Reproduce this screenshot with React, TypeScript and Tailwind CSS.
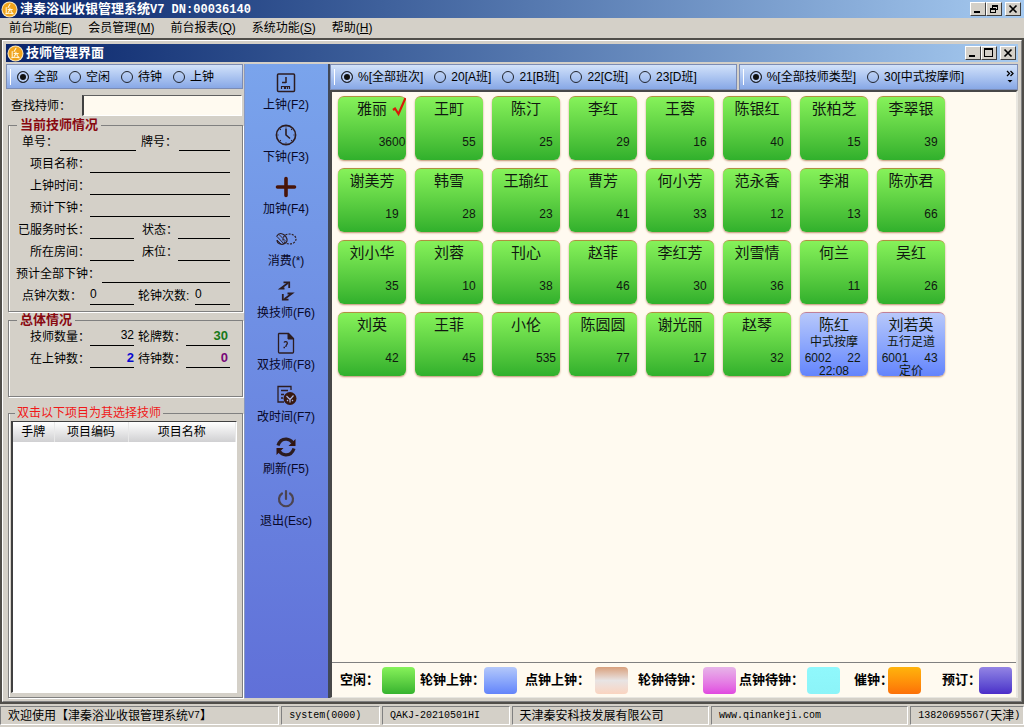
import React, { useState } from 'react';

interface Technician {
  name: string;
  no: string;
  service?: string;
  room?: string;
  note?: string;
}

const technicians: Technician[] = [
  { name: '雅丽', no: '3600' },
  { name: '王町', no: '55' },
  { name: '陈汀', no: '25' },
  { name: '李红', no: '29' },
  { name: '王蓉', no: '16' },
  { name: '陈银红', no: '40' },
  { name: '张柏芝', no: '15' },
  { name: '李翠银', no: '39' },
  { name: '谢美芳', no: '19' },
  { name: '韩雪', no: '28' },
  { name: '王瑜红', no: '23' },
  { name: '曹芳', no: '41' },
  { name: '何小芳', no: '33' },
  { name: '范永香', no: '12' },
  { name: '李湘', no: '13' },
  { name: '陈亦君', no: '66' },
  { name: '刘小华', no: '35' },
  { name: '刘蓉', no: '10' },
  { name: '刊心', no: '38' },
  { name: '赵菲', no: '46' },
  { name: '李红芳', no: '30' },
  { name: '刘雪情', no: '36' },
  { name: '何兰', no: '11' },
  { name: '吴红', no: '26' },
  { name: '刘英', no: '42' },
  { name: '王菲', no: '45' },
  { name: '小伦', no: '535' },
  { name: '陈圆圆', no: '77' },
  { name: '谢光丽', no: '17' },
  { name: '赵琴', no: '32' },
  { name: '陈红', no: '22', service: '中式按摩', room: '6002', note: '22:08' },
  { name: '刘若英', no: '43', service: '五行足道', room: '6001', note: '定价' },
];

const menus = [
  { text: '前台功能', key: 'F' },
  { text: '会员管理', key: 'M' },
  { text: '前台报表', key: 'Q' },
  { text: '系统功能', key: 'S' },
  { text: '帮助', key: 'H' },
];

const legends = [
  { text: '空闲：', label: 'w-[42px]', gap: '', swatch: 'from-[#86f25a] to-[#35b32f]' },
  { text: '轮钟上钟：', label: 'w-16', gap: 'ml-[5px]', swatch: 'from-[#b4c8fa] to-[#6484fa]' },
  { text: '点钟上钟：', label: 'w-[70px]', gap: 'ml-2', swatch: 'from-[#d8a07c] via-[#e8e4e4] to-[#fad4c0]' },
  { text: '轮钟待钟：', label: 'w-[65px]', gap: 'ml-2.5', swatch: 'from-[#e6b4e8] to-[#e048e0]' },
  { text: '点钟待钟：', label: 'w-[68px]', gap: 'ml-[3px]', swatch: 'from-[#90f8fc] to-[#8cf4f8]' },
  { text: '催钟：', label: 'w-[34px]', gap: 'ml-3.5', swatch: 'from-[#ffb40c] to-[#fc7008]' },
  { text: '预订：', label: 'w-[37px]', gap: 'ml-[21px]', swatch: 'from-[#9484e4] to-[#4c2cc8]' },
];

const Logo: React.FC = () => (
  <svg viewBox="0 0 18 18" className="h-[17px] w-[17px] shrink-0" fill="none">
    <circle cx="9" cy="9" r="8.5" fill="#f8e8c0" />
    <circle cx="9" cy="9" r="7.4" fill="#f0a41c" />
    <path
      d="M9.5 3.5 7.5 7M5.5 7v5.5M7.5 9h4.5M9.5 7.5c0 2-.5 3.500-2 4.500M10.500 9.500c0 1.500.5 2.500 1.500 3M5 13.500c2-.8 5-.8 8 0"
      stroke="#fff6dc"
      strokeWidth="1.1"
      strokeLinecap="round"
    />
  </svg>
);

const WindowButton: React.FC<{ label: string; children: React.ReactNode }> = ({ label, children }) => (
  <button
    type="button"
    aria-label={label}
    className="flex h-[14px] w-4 items-center justify-center border border-b-[#404040] border-l-white border-r-[#404040] border-t-white bg-[#d4d0c8]"
  >
    <svg viewBox="0 0 12 10" className="h-2.5 w-3" fill="none" stroke="#000" shapeRendering="crispEdges">
      {children}
    </svg>
  </button>
);

const WindowButtons: React.FC<{ restore?: boolean }> = ({ restore }) => (
  <div className="ml-auto flex items-center">
    <WindowButton label="最小化">
      <path d="M2 8h6" strokeWidth="2" />
    </WindowButton>
    <WindowButton label={restore ? '还原' : '最大化'}>
      {restore ? (
        <path d="M4 1h6M4 2h6M4.5 2v2M9.5 2v4M8 5.5h2M2 4h6M2 5h6M2.5 5v4M7.5 5v4M2 8.5h6" />
      ) : (
        <path d="M1 1h9M1.5 1v8M9.5 1v8M1 8.5h9" strokeWidth="1.3" />
      )}
    </WindowButton>
    <div className="w-[3px]" />
    <WindowButton label="关闭">
      <path d="M2.5 1.5l7 7M9.5 1.5l-7 7" strokeWidth="1.7" shapeRendering="auto" />
    </WindowButton>
  </div>
);

const actions: { text: string; icon: React.ReactNode }[] = [
  {
    text: '上钟(F2)',
    icon: (
      <>
        <rect x="2.5" y="2" width="17" height="17.5" rx="1" strokeWidth="1.5" />
        <path d="M11 5v6M11 10.5H7" strokeWidth="1.5" />
        <path d="M6.5 17v-2.5h3V17M10.5 17v-2.5h4V17M12.5 14.5V17" strokeWidth="1.2" />
      </>
    ),
  },
  {
    text: '下钟(F3)',
    icon: (
      <>
        <circle cx="11" cy="11" r="9.6" strokeWidth="1.6" />
        <path d="M11 4.5V11l4 3.5" strokeWidth="1.6" />
        <path d="M11 2.5v1M11 18.5v1M2.5 11h1M18.5 11h1M5 5l.8.8M17 5l-.8.8M5 17l.8-.8M17 17l-.8-.8" strokeWidth="1.1" />
      </>
    ),
  },
  {
    text: '加钟(F4)',
    icon: <path d="M11 2.5v17M2.5 11h17" stroke="#481408" strokeWidth="3.6" strokeLinecap="round" />,
  },
  {
    text: '消费(*)',
    icon: (
      <>
        <ellipse cx="14.5" cy="11" rx="6.5" ry="5" strokeWidth="1.2" strokeDasharray="2 1.2" />
        <path d="M1.5 8.5c1.500-2.500 4-3.500 6-2.500 2.500.8 5 4 4.500 7-.8 2.500-4 4-7 3-2-.6-3-2.500-3-4" strokeWidth="1.1" />
        <path d="M2 8.5l7 7.500M4 6.500l7 7M2 12l4 4" strokeWidth=".9" />
      </>
    ),
  },
  {
    text: '换技师(F6)',
    icon: (
      <>
        <path d="M9.5 8.500H5.500L13 3M12.500 13.500h4.500L9.500 19" strokeWidth="1.8" />
        <path d="M8.500 2.300h5.700V8M13.500 19.700H7.800V14" strokeWidth="1.8" />
      </>
    ),
  },
  {
    text: '双技师(F8)',
    icon: (
      <>
        <path d="M4 1.5h9.5l5 5V20a1 1 0 0 1-1 1H4.5a1 1 0 0 1-1-1V2z" strokeWidth="1.3" />
        <path d="M13 1l6 6h-6z" fill="#2c1c20" />
        <path d="M9 10.500c1-1.500 3.500-1 3.300.8-.2 1.200-1.500 1.700-1.500 3.700M8.500 15.500h1.500" strokeWidth="1.3" />
      </>
    ),
  },
  {
    text: '改时间(F7)',
    icon: (
      <>
        <path d="M16 6V2.5H3V18h6M6 6.5h7M6 10.5h3M6 14h2" strokeWidth="1.3" />
        <circle cx="15" cy="14.5" r="6.5" fill="#381810" stroke="none" />
        <path d="M11.5 12l3.500 3.500 3.500-4M15 15.500v3M12 17l1-1M18 17l-1-1" stroke="#a8b4e4" strokeWidth="1.2" />
      </>
    ),
  },
  {
    text: '刷新(F5)',
    icon: (
      <>
        <path d="M3 9.5C4.5 5 8 3 11.5 3.2c2.500.2 4.500 1.300 6 3.300M19 12.500c-1.500 4.500-5 6.500-8.500 6.300-2.500-.2-4.500-1.300-6-3.300" strokeWidth="3.2" />
        <path d="M20.5 3v7h-7zM1.5 19v-7h7z" fill="#301410" stroke="none" />
      </>
    ),
  },
  {
    text: '退出(Esc)',
    icon: <path d="M11 3v8M7 5.5a7 7 0 1 0 8 0" stroke="#4c4450" strokeWidth="2.2" strokeLinecap="round" />,
  },
];

interface RadioBarProps {
  name: string;
  options: string[];
  className: string;
  more?: boolean;
}

const RadioBar: React.FC<RadioBarProps> = ({ name, options, className, more }) => {
  const [value, setValue] = useState(options[0]);

  return (
    <div
      className={`flex items-center gap-[11px] border border-[#7c8cb4] bg-linear-to-b from-[#d2e2fa] to-[#88a8e6] pl-[3px] whitespace-nowrap ${className}`}
    >
      <div className="-mr-[5px] h-4 w-px bg-white" />
      {options.map((option) => (
        <label key={option} className="flex items-center gap-[5px]">
          <input
            type="radio"
            name={name}
            checked={value === option}
            onChange={() => setValue(option)}
            className="h-3 w-3 appearance-none rounded-full border border-[#20242c] checked:bg-[#101010] checked:shadow-[inset_0_0_0_2px_#b8ccf2]"
          />
          {option}
        </label>
      ))}
      {more && (
        <button type="button" aria-label="更多" className="mr-[3px] ml-auto">
          <svg viewBox="0 0 8 14" className="h-3.5 w-2" fill="none" stroke="#000" strokeWidth="1.3">
            <path d="M1 1l2.5 2.5L1 6M4.5 1L7 3.5 4.5 6" />
            <path d="M1.5 10h5L4 12.5z" fill="#000" stroke="none" />
          </svg>
        </button>
      )}
    </div>
  );
};

interface FieldProps {
  label: string;
  labelClass?: string;
  className: string;
  children?: React.ReactNode;
}

const Field: React.FC<FieldProps> = ({ label, labelClass = '', className, children }) => (
  <>
    <span className={`shrink-0 whitespace-nowrap ${labelClass}`}>{label}</span>
    <output aria-label={label} className={`h-full border-b border-black ${className}`}>
      {children}
    </output>
  </>
);

const Row: React.FC<{ className: string; children: React.ReactNode }> = ({ className, children }) => (
  <div className={`flex h-[22px] items-center pr-3 leading-[15px] *:pt-1 ${className}`}>{children}</div>
);

const groupBox = 'mr-px ml-0.5 border border-[#808080] shadow-[1px_1px_0_#fff,inset_1px_0_0_#fff]';

const TechnicianCard: React.FC<{ item: Technician; selected: boolean; onSelect: () => void }> = ({
  item,
  selected,
  onSelect,
}) => (
  <button
    type="button"
    onClick={onSelect}
    className={`relative flex h-16 w-[68px] flex-col rounded-md border-t bg-linear-to-b pt-[3px] text-center text-[#101810] shadow-[0_1px_2px_#c09070] ${
      item.room ? 'border-[#c08098] from-[#b8c8fa] to-[#6484fc]' : 'border-[#b09040] from-[#86f25a] to-[#30b02c]'
    }`}
  >
    <span className="h-[18px] w-full text-[15px] leading-[18px]">{item.name}</span>
    <span className="h-4 w-full leading-4">{item.service}</span>
    <span className="flex h-4 w-full justify-between pl-1 leading-4">
      <span className="w-7">{item.room}</span>
      <span className="w-7">{item.no}</span>
    </span>
    <span className="h-2.5 w-full leading-[10px]">{item.note}</span>
    {selected && (
      <svg viewBox="0 0 14 20" className="absolute top-0 right-0 h-5 w-3.5" fill="none" stroke="#d81808">
        <path d="M1 13l2-1.5 3.5 5.5L13.5 1" strokeWidth="2.2" />
      </svg>
    )}
  </button>
);

const StatusCell: React.FC<{ className: string; children: React.ReactNode }> = ({ className, children }) => (
  <div
    className={`flex items-center overflow-hidden border border-b-white border-l-[#808080] border-r-white border-t-[#808080] pl-[7px] whitespace-nowrap ${className}`}
  >
    {children}
  </div>
);

const App: React.FC = () => {
  const [selected, setSelected] = useState('雅丽');

  return (
    <div className="flex min-h-screen flex-col bg-[#d4d0c8] font-['Liberation_Sans','Noto_Sans_CJK_SC',sans-serif] text-xs text-black">
      <header className="flex h-[18px] items-center gap-0.5 bg-linear-to-r from-[#0a246a] to-[#a6caf0] pr-[3px] pl-px text-white">
        <Logo />
        <h1 className="text-[13px] leading-[18px] font-bold whitespace-pre">
          津秦浴业收银管理系统<span className="font-['Liberation_Mono'] text-xs">V7 DN:00036140</span>
        </h1>
        <WindowButtons restore />
      </header>

      <nav className="flex h-5 items-center gap-4 pl-[9px]">
        {menus.map((menu) => (
          <button key={menu.key} type="button" className="leading-4">
            {menu.text}(<span className="underline">{menu.key}</span>)
          </button>
        ))}
      </nav>

      <main className="flex flex-1 flex-col border-2 border-[#504e4a]">
        <div className="flex flex-1 flex-col border border-b-[#808080] border-l-white border-r-[#808080] border-t-white p-[3px]">
          <div className="mb-0.5 flex h-[18px] items-center gap-0.5 bg-linear-to-r from-[#0a246a] to-[#a6caf0] pr-0.5 pl-px text-white">
            <Logo />
            <h2 className="text-[13px] leading-[18px] font-bold">技师管理界面</h2>
            <WindowButtons />
          </div>

          <div className="flex flex-1">
            <section className="flex w-[238px] shrink-0 flex-col">
              <RadioBar name="state" options={['全部', '空闲', '待钟', '上钟']} className="mr-px h-[25px]" />

              <label className="mt-1.5 mb-[5px] flex h-[21px] items-center pr-0.5 pl-[5px]">
                <span className="w-[71px]">查找持师：</span>
                <input
                  type="text"
                  className="h-full min-w-0 flex-1 border border-b-white border-l-2 border-l-[#404040] border-r-white border-t-[#606060] bg-[#fffaf0] px-1 outline-none"
                />
              </label>

              <fieldset className={`${groupBox} mb-1 pb-1.5`}>
                <legend className="ml-2 px-[3px] text-[13px] leading-[8px] font-bold text-[#880810]">当前技师情况</legend>
                <Row className="pl-[13px]">
                  <Field label="单号：" labelClass="w-[38px]" className="mr-[5px] w-[76px]" />
                  <Field label="牌号：" labelClass="w-[38px]" className="flex-1" />
                </Row>
                <Row className="pl-[21px]">
                  <Field label="项目名称：" className="flex-1" />
                </Row>
                <Row className="pl-[21px]">
                  <Field label="上钟时间：" className="flex-1" />
                </Row>
                <Row className="pl-[21px]">
                  <Field label="预计下钟：" className="flex-1" />
                </Row>
                <Row className="pl-[9px]">
                  <Field label="已服务时长：" className="mr-2 w-11" />
                  <Field label="状态：" className="flex-1" />
                </Row>
                <Row className="pl-[21px]">
                  <Field label="所在房间：" className="mr-2 w-11" />
                  <Field label="床位：" className="flex-1" />
                </Row>
                <Row className="pl-[7px]">
                  <Field label="预计全部下钟：" labelClass="w-[86px]" className="flex-1" />
                </Row>
                <Row className="pl-[13px]">
                  <Field label="点钟次数：" labelClass="w-[68px]" className="mr-1 w-11">0</Field>
                  <Field label="轮钟次数:" labelClass="w-[57px]" className="flex-1">0</Field>
                </Row>
              </fieldset>

              <fieldset className={`${groupBox} mb-3 pb-7`}>
                <legend className="ml-2 px-[3px] text-[13px] leading-[8px] font-bold text-[#880810]">总体情况</legend>
                <Row className="pl-[21px]">
                  <Field label="技师数量：" className="mr-1 w-11 text-right">32</Field>
                  <Field label="轮牌数：" className="flex-1 pr-0.5 text-right text-[13px] font-bold text-[#187818]">30</Field>
                </Row>
                <Row className="pl-[21px]">
                  <Field label="在上钟数：" className="mr-1 w-11 text-right text-[13px] font-bold text-[#0808d0]">2</Field>
                  <Field label="待钟数：" className="flex-1 pr-0.5 text-right text-[13px] font-bold text-[#780878]">0</Field>
                </Row>
              </fieldset>

              <fieldset className={`${groupBox} flex flex-1 flex-col px-0.5 pt-1 pb-1`}>
                <legend className="ml-1 px-0.5 leading-[8px] text-[#f01818]">双击以下项目为其选择技师</legend>
                <div className="mr-[3px] flex-1 border border-b-white border-l-2 border-l-[#404040] border-r-white border-t-[#404040] bg-white">
                  <table className="w-full table-fixed">
                    <thead>
                      <tr className="h-5 bg-linear-to-b from-white to-[#d0d0d2] *:border-r *:border-[#e8e8e8] *:font-normal">
                        <th className="w-[41px]">手牌</th>
                        <th className="w-[74px]">项目编码</th>
                        <th>项目名称</th>
                      </tr>
                    </thead>
                    <tbody />
                  </table>
                </div>
              </fieldset>
            </section>

            <aside className="flex w-[86px] shrink-0 flex-col border-r-2 border-l border-r-[#404858] border-l-[#8898c0] bg-linear-to-b from-[#7aa4ec] to-[#6070d8] pt-1 pr-px">
              {actions.map((action) => (
                <button key={action.text} type="button" className="flex h-[52px] flex-col items-center pt-1 text-[#080828]">
                  <svg viewBox="0 0 22 22" className="h-[22px] w-[22px]" fill="none" stroke="#2c1c20">
                    {action.icon}
                  </svg>
                  <span className="leading-[22px]">{action.text}</span>
                </button>
              ))}
            </aside>

            <section className="flex min-w-0 flex-1 flex-col">
              <div className="flex h-[26px] gap-0.5">
                <RadioBar
                  name="shift"
                  options={['%[全部班次]', '20[A班]', '21[B班]', '22[C班]', '23[D班]']}
                  className="flex-[407]"
                />
                <RadioBar
                  name="type"
                  options={['%[全部技师类型]', '30[中式按摩师]']}
                  className="flex-[278]"
                  more
                />
              </div>

              <div className="flex flex-1 flex-col border-t-2 border-r-2 border-b border-l-2 border-t-[#484848] border-r-[#e8e6e0] border-b-[#e8e6e0] border-l-[#484848] bg-[#fffaf0]">
                <div className="flex flex-1 flex-wrap content-start gap-x-[9px] gap-y-2 px-1.5 pt-1">
                  {technicians.map((item) => (
                    <TechnicianCard
                      key={item.name}
                      item={item}
                      selected={item.name === selected}
                      onSelect={() => setSelected(item.name)}
                    />
                  ))}
                </div>

                <div className="flex h-[35px] items-center border-t border-[#808080] pl-2 text-[13px] font-bold">
                  {legends.map((legend) => (
                    <div key={legend.text} className={`flex items-center ${legend.gap}`}>
                      <span className={`whitespace-nowrap ${legend.label}`}>{legend.text}</span>
                      <span className={`h-[27px] w-[33px] rounded-sm bg-linear-to-b ${legend.swatch}`} />
                    </div>
                  ))}
                </div>
              </div>
            </section>
          </div>
        </div>
      </main>

      <footer className="flex h-[23px] gap-0.5 py-0.5">
        <StatusCell className="flex-[271]">
          欢迎使用【津秦浴业收银管理系统<span className="font-['Liberation_Mono'] text-[10px]">V7</span>】
        </StatusCell>
        <StatusCell className="flex-[90] font-['Liberation_Mono'] text-[10px]">system(0000)</StatusCell>
        <StatusCell className="flex-[119] font-['Liberation_Mono'] text-[10px]">QAKJ-20210501HI</StatusCell>
        <StatusCell className="flex-[189]">天津秦安科技发展有限公司</StatusCell>
        <StatusCell className="flex-[189] font-['Liberation_Mono'] text-[10px]">www.qinankeji.com</StatusCell>
        <StatusCell className="flex-[105]">
          <span className="font-['Liberation_Mono'] text-[10px]">13820695567(</span>天津
          <span className="font-['Liberation_Mono'] text-[10px]">)</span>
        </StatusCell>
      </footer>
    </div>
  );
};

export default App;
